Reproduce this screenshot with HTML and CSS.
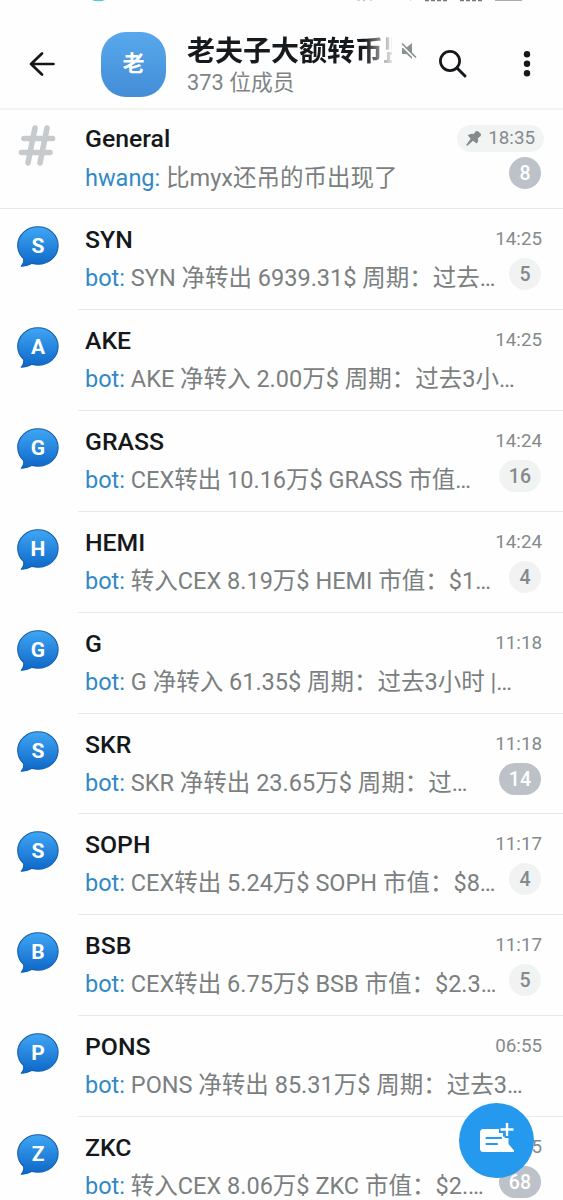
FILE: index.html
```
<!DOCTYPE html>
<html lang="zh-CN">
<head>
<meta charset="utf-8">
<title>老夫子大额转币</title>
<link rel="stylesheet" href="styles.css">
</head>
<body>
<svg class="defs" aria-hidden="true">
  <defs>
    <linearGradient id="blue" x1="0" y1="0" x2="0" y2="1"><stop offset="0" stop-color="#3fa6f5"/><stop offset="1" stop-color="#0d66c6"/></linearGradient>
    <linearGradient id="rim" x1="0" y1="0" x2="0" y2="1"><stop offset="0" stop-color="#1d5e9f"/><stop offset="1" stop-color="#0d5fba"/></linearGradient>
    <symbol id="bubble" viewBox="0 0 44 44"><path d="M22 1.8C33 1.8 42.1 9.8 42.1 20.5S33 39.2 22 39.2c-2.1 0-4.1-.3-6-.8-3.2 1.9-7.200 2.800-10.800 2.900 1.900-2.100 2.900-4.800 2.500-7.600C4 30.200 1.700 25.600 1.700 20.500 1.700 9.800 11 1.800 22 1.800z" fill="url(#blue)" stroke="url(#rim)" stroke-width="1.100" stroke-linejoin="round"/></symbol>
  </defs>
</svg>
<div class="screen">
  <div class="status"><svg width="563" height="3"><path d="M92 0h13q-2 1.300-6.500 1.300T92 0z" fill="#5fc5cb"/><path d="M357 0h3M363 0l2 1M370 0h2M410 0h1" stroke="#aaa"/><path d="M425 .5h24M460 .5h22" stroke="#777" stroke-width="1.500" stroke-dasharray="4 2"/><path d="M495 .3h27" stroke="#999"/></svg></div>
  <header class="header">
    <svg class="back" width="30" height="30" viewBox="0 0 30 30"><path d="M26.500 15H4M15 4.500L4 15 15 25.500" fill="none" stroke="#15181b" stroke-width="2.700" stroke-linecap="round" stroke-linejoin="round"/></svg>
    <div class="avatar">老</div>
    <div class="chat">
      <div class="chat-top"><div class="chat-name">老夫子大额转币监</div>
        <svg class="mute" width="18" height="18" viewBox="0 0 18 18"><path d="M2 6h4L12 1V17L6.500 12H2z" fill="#8b9191"/><path d="M1.500 3l14 14" stroke="#fff" stroke-width="2"/><path d="M2 1.500l14 14" stroke="#8b9191" stroke-width="1.700"/></svg>
      </div>
      <div class="members">373 位成员</div>
    </div>
    <svg class="search" width="30" height="30" viewBox="0 0 30 30" fill="none" stroke="#15181b"><circle cx="12" cy="12" r="9.600" stroke-width="2.700"/><path d="M19 19l8 8" stroke-width="3" stroke-linecap="round"/></svg>
    <svg class="more" width="8" height="28" viewBox="0 0 8 28" fill="#15181b"><circle cx="4" cy="4.300" r="3.200"/><circle cx="4" cy="13.800" r="3.200"/><circle cx="4" cy="23.200" r="3.200"/></svg>
  </header>
  <main class="list">
    <section class="row row-general">
      <div class="icon"><svg class="hash" width="38" height="42" viewBox="0 0 38 42"><path d="M17 3L10 38M29 3L22 38M6 13.500H34.500M3.500 27.500H32" stroke="#c6cacd" stroke-width="5.600" stroke-linecap="round" fill="none"/></svg></div>
      <div class="body"><div class="top"><h2>General</h2><span class="time pinned"><svg width="17" height="17" viewBox="0 0 17 17"><path d="M10.500 1.500Q12 .2 13.700 1.700L15.500 3.600Q17 5.300 15.200 6.400L12.800 8.300Q14 11.500 11.500 13.500L8 10.700 3 15.200Q1 16.500 1.500 14.500L5.700 8.800 2.700 5.300Q5.700 3.200 8.700 4z" fill="#858a8c"/></svg>18:35</span></div>
      <div class="bottom"><p><b>hwang:</b> 比myx还吊的币出现了</p><span class="badge strong">8</span></div></div>
    </section>
    <section class="row"><div class="icon"><svg class="bubble"><use href="#bubble"/></svg><span>S</span></div><div class="body"><div class="top"><h2>SYN</h2><span class="time">14:25</span></div><div class="bottom"><p><b>bot:</b> SYN 净转出 6939.31$ 周期：过去…</p><span class="badge">5</span></div></div></section>
    <section class="row"><div class="icon"><svg class="bubble"><use href="#bubble"/></svg><span>A</span></div><div class="body"><div class="top"><h2>AKE</h2><span class="time">14:25</span></div><div class="bottom"><p><b>bot:</b> AKE 净转入 2.00万$ 周期：过去3小…</p></div></div></section>
    <section class="row"><div class="icon"><svg class="bubble"><use href="#bubble"/></svg><span>G</span></div><div class="body"><div class="top"><h2>GRASS</h2><span class="time">14:24</span></div><div class="bottom"><p><b>bot:</b> CEX转出 10.16万$ GRASS 市值…</p><span class="badge">16</span></div></div></section>
    <section class="row"><div class="icon"><svg class="bubble"><use href="#bubble"/></svg><span>H</span></div><div class="body"><div class="top"><h2>HEMI</h2><span class="time">14:24</span></div><div class="bottom"><p><b>bot:</b> 转入CEX 8.19万$ HEMI 市值：$1…</p><span class="badge">4</span></div></div></section>
    <section class="row"><div class="icon"><svg class="bubble"><use href="#bubble"/></svg><span>G</span></div><div class="body"><div class="top"><h2>G</h2><span class="time">11:18</span></div><div class="bottom"><p><b>bot:</b> G 净转入 61.35$ 周期：过去3小时 |…</p></div></div></section>
    <section class="row"><div class="icon"><svg class="bubble"><use href="#bubble"/></svg><span>S</span></div><div class="body"><div class="top"><h2>SKR</h2><span class="time">11:18</span></div><div class="bottom"><p><b>bot:</b> SKR 净转出 23.65万$ 周期：过…</p><span class="badge strong">14</span></div></div></section>
    <section class="row"><div class="icon"><svg class="bubble"><use href="#bubble"/></svg><span>S</span></div><div class="body"><div class="top"><h2>SOPH</h2><span class="time">11:17</span></div><div class="bottom"><p><b>bot:</b> CEX转出 5.24万$ SOPH 市值：$8…</p><span class="badge">4</span></div></div></section>
    <section class="row"><div class="icon"><svg class="bubble"><use href="#bubble"/></svg><span>B</span></div><div class="body"><div class="top"><h2>BSB</h2><span class="time">11:17</span></div><div class="bottom"><p><b>bot:</b> CEX转出 6.75万$ BSB 市值：$2.3…</p><span class="badge">5</span></div></div></section>
    <section class="row"><div class="icon"><svg class="bubble"><use href="#bubble"/></svg><span>P</span></div><div class="body"><div class="top"><h2>PONS</h2><span class="time">06:55</span></div><div class="bottom"><p><b>bot:</b> PONS 净转出 85.31万$ 周期：过去3…</p></div></div></section>
    <section class="row"><div class="icon"><svg class="bubble"><use href="#bubble"/></svg><span>Z</span></div><div class="body"><div class="top"><h2>ZKC</h2><span class="time">06:55</span></div><div class="bottom"><p><b>bot:</b> 转入CEX 8.06万$ ZKC 市值：$2.…</p><span class="badge strong">68</span></div></div></section>
  </main>
  <div class="fab"><svg width="38" height="34" viewBox="0 0 38 34"><path d="M5.500 8H21V12H25V15.500H30.500V23L36 29.500Q36.500 31 35 31H5.500Q2 31 2 27.500V11.500Q2 8 5.500 8z" fill="#fff"/><path d="M8.500 17H23M8.500 23H19" stroke="#2599ed" stroke-width="2.200" stroke-linecap="round"/><path d="M29 2V17M21.500 8.500H36" stroke="#2599ed" stroke-width="5"/><path d="M29 2V15M22.500 8.500H35.500" stroke="#fff" stroke-width="2.400"/></svg></div>
</div>
</body>
</html>
```
FILE: styles.css
```
* { box-sizing: border-box; }
body { margin: 0; background: #fff; font-family: Roboto, "Noto Sans CJK SC", sans-serif; }
.defs { position: absolute; width: 0; height: 0; }
.screen { position: relative; width: 563px; height: 1200px; overflow: hidden; background: #fefefe; }
.status { height: 20px; }
.status svg { display: block; }
.header { height: 90px; display: flex; align-items: center; border-bottom: 2px solid #f4f4f4; padding-left: 27px; }
.back { flex: none; }
.avatar { flex: none; width: 65px; height: 65px; margin-left: 44px; border-radius: 25px; background: linear-gradient(#58a8ed, #438dd6); color: #fff; font-size: 22px; font-weight: 700; line-height: 64px; text-align: center; }
.chat { width: 234px; margin-left: 21px; height: 65px; flex: none; }
.chat-top { display: flex; height: 38px; }
.chat-name { width: 205px; flex: none; overflow: hidden; white-space: nowrap; font-size: 28px; line-height: 39px; font-weight: 700; color: #171a1d; -webkit-mask-image: linear-gradient(90deg, #000 178px, transparent 208px); mask-image: linear-gradient(90deg, #000 178px, transparent 208px); }
.mute { margin: 10px 0 0 8px; }
.members { font-size: 21.800px; line-height: 26px; color: #808486; }
.search { flex: none; margin-left: 17px; }
.more { flex: none; margin-left: 55px; }
.row { height: 100.920px; display: grid; grid-template-columns: 78px 1fr; }
.row-general { height: 99px; border-bottom: 1px solid #e6e8e8; }
.icon { display: grid; padding: 16px 0 0 16px; grid-template-columns: 44px; grid-template-rows: 44px; }
.icon > * { grid-area: 1 / 1; }
.icon span { color: #fff; font-size: 21px; font-weight: 700; line-height: 42px; text-align: center; }
.bubble { width: 44px; height: 44px; }
.hash { margin: 15px 0 0 2px; }
.row-general .icon { padding-top: 0; }
.body { border-bottom: 1px solid #e8eaea; padding: 14px 21px 0 7px; min-width: 0; }
.row-general .body { border: 0; padding-top: 12px; }
.top { display: flex; justify-content: space-between; height: 34px; }
h2 { margin: 0; font-size: 24.800px; line-height: 34px; font-weight: 500; color: #15181b; }
.time { font-size: 18.800px; line-height: 32px; color: #858a8c; }
.pinned { display: flex; align-items: center; gap: 6px; height: 27px; margin: 3px -2px 0 0; padding: 0 9px 0 8px; border-radius: 14px; background: #f2f4f4; line-height: 27px; }
.bottom { display: flex; height: 42px; justify-content: space-between; align-items: flex-start; }
.row-general .bottom { padding-top: 1px; }
.row-general .badge { margin-top: 0; }
p { margin: 0; font-size: 23.500px; line-height: 42px; white-space: nowrap; color: #7b7f80; }
p b { color: #3189c8; font-weight: 400; }
.badge { flex: none; min-width: 32px; height: 32px; margin: 1px 1px 0 0; padding: 0 10px; border-radius: 16px; background: #f1f3f3; color: #85898c; font-size: 19.500px; line-height: 33px; font-weight: 500; text-align: center; }
.strong { background: #bcc2c8; color: #fff; }
.fab { position: absolute; left: 459px; top: 1103px; width: 75px; height: 75px; border-radius: 50%; background: #2599ed; display: grid; place-items: center; padding: 0 0 5px 1px; }
```
